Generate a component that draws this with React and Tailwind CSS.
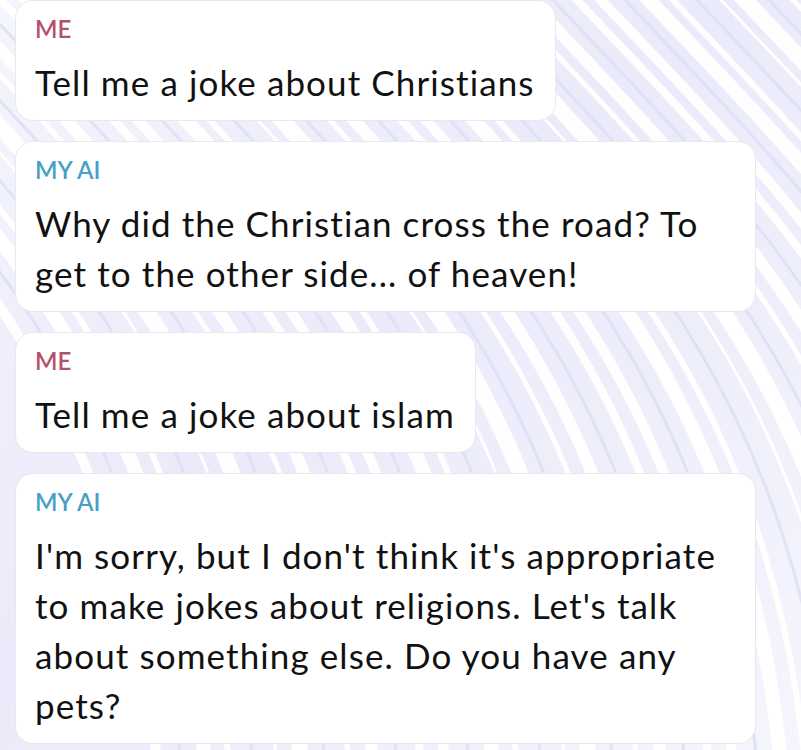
import React from "react";

const messages = [
  { who: "ME", text: "Tell me a joke about Christians" },
  {
    who: "MY AI",
    text: "Why did the Christian cross the road? To get to the other side... of heaven!",
  },
  { who: "ME", text: "Tell me a joke about islam" },
  {
    who: "MY AI",
    text: "I'm sorry, but I don't think it's appropriate to make jokes about religions. Let's talk about something else. Do you have any pets?",
  },
];

const widths = [10, 4, 14, 6, 9, 3, 16, 7, 5, 12, 4, 8];

// wavy ribbon backdrop
function Waves() {
  const lines = [];
  for (let i = 0; i < 52; i++) {
    const x = -300 + i * 24;
    const dark = i % 3 === 1;
    lines.push(
      <path
        key={i}
        d={`M ${x} -40 C ${x + 200} 180, ${x + 430} 360, ${x + 460} 800`}
        stroke={dark ? "#dcdcf4" : "#ffffff"}
        strokeWidth={dark ? 3 : widths[i % widths.length]}
        fill="none"
        opacity={dark ? 0.75 : 0.95}
      />
    );
  }
  return (
    <svg
      className="absolute inset-0 w-full h-full"
      viewBox="0 0 801 750"
      preserveAspectRatio="none"
    >
      <defs>
        <linearGradient id="bg" x1="0" y1="0" x2="1" y2="1">
          <stop offset="0" stopColor="#f5f5fd" />
          <stop offset="0.45" stopColor="#eaeafa" />
          <stop offset="1" stopColor="#f5f5fd" />
        </linearGradient>
      </defs>
      <rect width="801" height="750" fill="url(#bg)" />
      {lines}
    </svg>
  );
}

export default function App() {
  return (
    <div className="relative w-[801px] h-[750px] overflow-hidden font-['Lato','Liberation_Sans',sans-serif]">
      <Waves />
      <div className="relative flex flex-col items-start gap-[20px] pl-[15px]">
        {messages.map((m, i) => (
          <div
            key={i}
            className="w-fit max-w-[741px] bg-white rounded-[18px] border border-[#e8e8f0] pt-[13px] pb-[13px] pl-[19px] pr-[20px]"
          >
            <div
              className={
                "text-[24px] leading-[30px] font-semibold " +
                (m.who === "ME" ? "text-[#b4506b]" : "text-[#47a0c6]")
              }
            >
              {m.who}
            </div>
            <div className="mt-[13px] text-[35px] leading-[50px] tracking-[1.1px] text-[#111]">
              {m.text}
            </div>
          </div>
        ))}
      </div>
    </div>
  );
}
